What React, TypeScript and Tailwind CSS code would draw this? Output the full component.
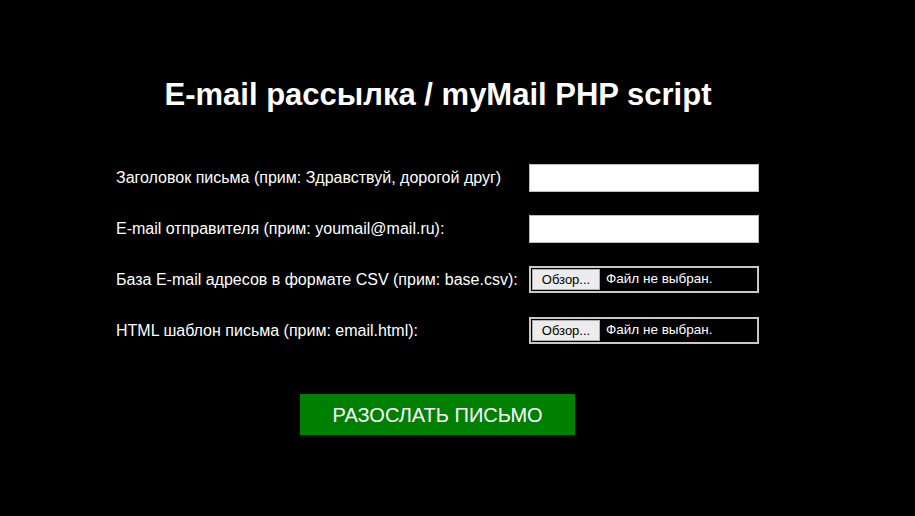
const rows = [
  { label: "Заголовок письма (прим: Здравствуй, дорогой друг)", type: "text" },
  { label: "E-mail отправителя (прим: youmail@mail.ru):", type: "text" },
  { label: "База E-mail адресов в формате CSV (прим: base.csv):", type: "file" },
  { label: "HTML шаблон письма (прим: email.html):", type: "file" },
];

function FileBox() {
  return (
    <div className="self-start w-[230px] h-[27px] border-2 border-[#c8c8c8] bg-black flex items-center px-[1px]">
      <div className="h-[21px] w-[68px] bg-[#ececec] border border-[#adadad] flex items-center justify-center text-[13px] text-black">
        Обзор...
      </div>
      <span className="ml-[6px] text-[13.5px] text-white">Файл не выбран.</span>
    </div>
  );
}

export default function App() {
  return (
    <div className="w-[915px] h-[516px] bg-black text-white font-['Liberation_Sans',Arial,sans-serif]">
      <div className="w-[876px] flex flex-col items-center">
        <h1 className="mt-[77px] text-[31px] font-bold leading-[36px]">E-mail рассылка / myMail PHP script</h1>
        <div className="mt-[51px] w-[644px] grid grid-cols-[413px_231px] auto-rows-[28px] gap-y-[23px] items-center">
          {rows.map((r) => (
            <div key={r.label} className="contents">
              <div className="text-[16px] leading-[28px]">{r.label}</div>
              {r.type === "text" ? (
                <div className="w-[230px] h-[28px] bg-white border border-[#bdbdbd]" />
              ) : (
                <FileBox />
              )}
            </div>
          ))}
        </div>
        <button className="mt-[49px] mr-[1px] w-[275px] h-[41px] bg-[#008000] text-white text-[20px]">
          РАЗОСЛАТЬ ПИСЬМО
        </button>
      </div>
    </div>
  );
}
